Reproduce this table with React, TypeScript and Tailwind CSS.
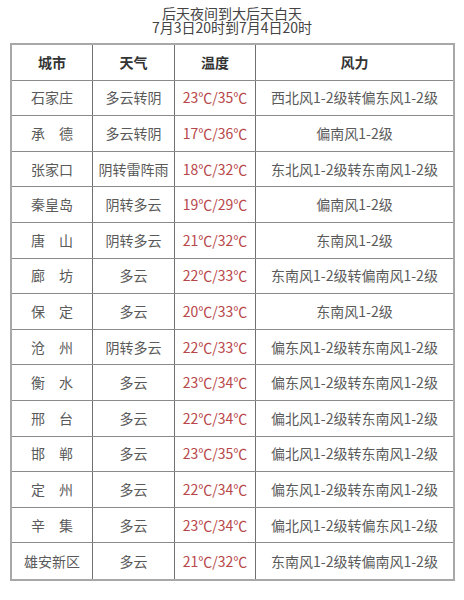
const ROWS: [string, string, string, string][] = [
  ['石家庄', '多云转阴', '23℃/35℃', '西北风1-2级转偏东风1-2级'],
  ['承　德', '多云转阴', '17℃/36℃', '偏南风1-2级'],
  ['张家口', '阴转雷阵雨', '18℃/32℃', '东北风1-2级转东南风1-2级'],
  ['秦皇岛', '阴转多云', '19℃/29℃', '偏南风1-2级'],
  ['唐　山', '阴转多云', '21℃/32℃', '东南风1-2级'],
  ['廊　坊', '多云', '22℃/33℃', '东南风1-2级转偏南风1-2级'],
  ['保　定', '多云', '20℃/33℃', '东南风1-2级'],
  ['沧　州', '阴转多云', '22℃/33℃', '偏东风1-2级转东南风1-2级'],
  ['衡　水', '多云', '23℃/34℃', '偏东风1-2级转东南风1-2级'],
  ['邢　台', '多云', '22℃/34℃', '偏北风1-2级转东南风1-2级'],
  ['邯　郸', '多云', '23℃/35℃', '偏北风1-2级转东南风1-2级'],
  ['定　州', '多云', '22℃/34℃', '偏东风1-2级转东南风1-2级'],
  ['辛　集', '多云', '23℃/34℃', '偏北风1-2级转偏东风1-2级'],
  ['雄安新区', '多云', '21℃/32℃', '东南风1-2级转偏南风1-2级'],
];

const font = { fontFamily: '"Noto Sans CJK SC", "Liberation Serif", serif' };

function Row({ cells, head }: { cells: string[]; head?: boolean }) {
  return (
    <div className="grid grid-cols-[81px_82px_81px_1fr] h-[35.6px] border-b border-[#8a8a8a] last:border-b-0">
      {cells.map((c, i) => (
        <div
          key={i}
          className={
            'flex items-center justify-center text-[14px] whitespace-nowrap ' +
            (i < 3 ? 'border-r border-[#707070] ' : '') +
            (head ? 'font-bold text-[#333]' : i === 2 ? 'text-[#b8474a]' : 'text-[#5a5a5a]')
          }
        >
          {c}
        </div>
      ))}
    </div>
  );
}

export default function App() {
  return (
    <div className="w-[464px] h-[600px] bg-white" style={font}>
      <div className="pt-[6px] text-center text-[14px] leading-[14px] text-[#444]">
        <div>后天夜间到大后天白天</div>
        <div>7月3日20时到7月4日20时</div>
      </div>
      <div className="mx-[10px] mt-[9px] w-[445px] border-2 border-[#a8a8a8]">
        <Row head cells={['城市', '天气', '温度', '风力']} />
        {ROWS.map(r => (
          <Row key={r[0]} cells={r} />
        ))}
      </div>
    </div>
  );
}
